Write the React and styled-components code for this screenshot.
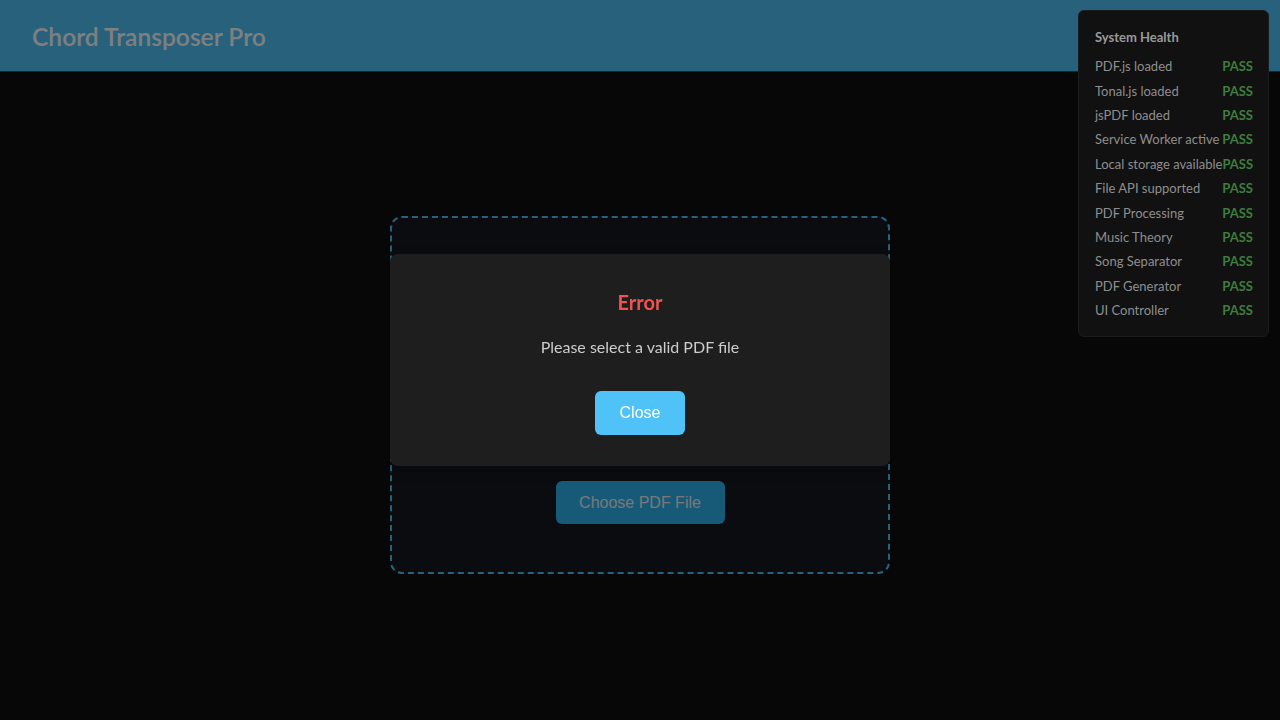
import styled, { createGlobalStyle } from "styled-components";

const checks = [
  "PDF.js loaded",
  "Tonal.js loaded",
  "jsPDF loaded",
  "Service Worker active",
  "Local storage available",
  "File API supported",
  "PDF Processing",
  "Music Theory",
  "Song Separator",
  "PDF Generator",
  "UI Controller",
];

const GlobalStyle = createGlobalStyle`
  html, body {
    margin: 0;
    padding: 0;
    background: #0f0f0f;
    font-family: "Segoe UI", "Lato", "Noto Sans", sans-serif;
  }
  * { box-sizing: border-box; }
`;

export default function App() {
  return (
    <>
      <GlobalStyle />
      <Page>
        <Header>
          <Title>Chord Transposer Pro</Title>
        </Header>
        <Main>
          <DropZone>
            <ChooseButton>Choose PDF File</ChooseButton>
          </DropZone>
        </Main>
      </Page>

      <Overlay>
        <Modal>
          <ModalTitle>Error</ModalTitle>
          <ModalText>Please select a valid PDF file</ModalText>
          <CloseButton>Close</CloseButton>
        </Modal>
      </Overlay>

      <HealthPanel>
        <HealthTitle>System Health</HealthTitle>
        {checks.map((c) => (
          <HealthRow key={c}>
            <HealthLabel>{c}</HealthLabel>
            <Pass>PASS</Pass>
          </HealthRow>
        ))}
      </HealthPanel>
    </>
  );
}

const Page = styled.div`
  min-height: 720px;
  background: #0f0f0f;
`;

const Header = styled.header`
  height: 72px;
  background: #4fc3f7;
  border-bottom: 1px solid #1a5670;
  display: flex;
  align-items: center;
  padding: 0 32px;
`;

const Title = styled.h1`
  margin: 2px 0 0;
  font-size: 24.6px;
  font-weight: 600;
  color: #ffffff;
`;

const Main = styled.main`
  display: flex;
  justify-content: center;
  padding-top: 144px;
`;

const DropZone = styled.div`
  width: 500px;
  height: 358px;
  border: 2px dashed #4fc3f7;
  border-radius: 12px;
  background: #141820;
  display: flex;
  align-items: flex-end;
  justify-content: center;
  padding-bottom: 48px;
`;

const ChooseButton = styled.button`
  width: 169px;
  height: 43px;
  border: none;
  border-radius: 6px;
  background: #2eb4f0;
  color: #f0f0f0;
  font-family: "Liberation Sans", Arial, sans-serif;
  font-size: 16px;
`;

const Overlay = styled.div`
  position: fixed;
  inset: 0;
  background: rgba(0, 0, 0, 0.5);
  display: flex;
  align-items: center;
  justify-content: center;
`;

const Modal = styled.div`
  width: 500px;
  height: 212px;
  background: #1e1e1e;
  border-radius: 8px;
  box-shadow: 0 4px 16px rgba(0, 0, 0, 0.25);
  padding: 34px 32px 0;
  display: flex;
  flex-direction: column;
  align-items: center;
`;

const ModalTitle = styled.h2`
  margin: 0;
  font-size: 20px;
  line-height: 28px;
  font-weight: 700;
  color: #ef5350;
`;

const ModalText = styled.p`
  margin: 20px 0 0;
  font-size: 16px;
  line-height: 22px;
  color: #cccccc;
`;

const CloseButton = styled.button`
  margin-top: 33px;
  width: 90px;
  height: 44px;
  border: none;
  border-radius: 6px;
  background: #4fc3f7;
  color: #ffffff;
  font-family: "Liberation Sans", Arial, sans-serif;
  font-size: 16px;
`;

const HealthPanel = styled.aside`
  position: fixed;
  top: 10px;
  right: 11px;
  width: 191px;
  padding: 17px 15px 14px 16px;
  background: #111111;
  border: 1px solid #1c1c1c;
  border-radius: 6px;
  z-index: 10;
`;

const HealthTitle = styled.div`
  font-size: 13px;
  font-weight: 700;
  color: #9a9a9a;
  line-height: 18px;
  margin-bottom: 8px;
`;

const HealthRow = styled.div`
  display: flex;
  justify-content: space-between;
  align-items: center;
  height: 24.4px;
  font-size: 13px;
`;

const HealthLabel = styled.span`
  color: #8e8e8e;
  white-space: nowrap;
`;

const Pass = styled.span`
  color: #3d7d3d;
  font-weight: 700;
`;
